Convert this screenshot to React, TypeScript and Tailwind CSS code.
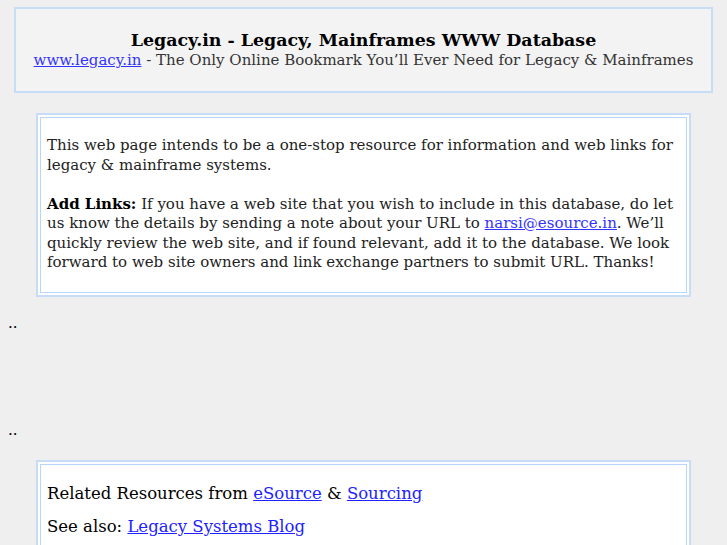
export default function App() {
  const serif = { fontFamily: '"DejaVu Serif", serif' }
  return (
    <div className="min-h-[545px] bg-[#efefef] text-[#222]" style={serif}>
      <div className="pt-[7px]">
        {/* header */}
        <div className="mx-[14px] h-[86px] border-2 border-[#c6dcf7] bg-[#f3f3f3] flex flex-col items-center justify-center">
          <h1 className="text-[17.4px] font-bold leading-[20px] text-black">
            Legacy.in - Legacy, Mainframes WWW Database
          </h1>
          <p className="text-[15px] leading-[20px] text-[#333]">
            <a href="#" className="text-[#3333ff] underline">www.legacy.in</a> - The Only Online Bookmark You’ll Ever Need for Legacy &amp; Mainframes
          </p>
        </div>

        {/* intro */}
        <div className="mt-[20px] ml-[36px] w-[655px] border-2 border-[#c6dcf7] bg-white p-[2px]">
          <div className="border border-[#b8d6fb] px-[6px] pt-[18px] pb-[19px] text-[15px] leading-[19.5px]">
            <p>
              This web page intends to be a one-stop resource for information and web links for legacy &amp; mainframe systems.
            </p>
            <p className="mt-[19.5px]">
              <b className="text-black">Add Links:</b> If you have a web site that you wish to include in this database, do let us know the details by sending a note about your URL to{' '}
              <a href="#" className="text-[#3333ff] underline">narsi@esource.in</a>. We’ll quickly review the web site, and if found relevant, add it to the database. We look forward to web site owners and link exchange partners to submit URL. Thanks!
            </p>
          </div>
        </div>

        <div className="ml-[8px] mt-[16px] text-[15px] leading-[20px] text-black">..</div>
        <div className="h-[87px]" />
        <div className="ml-[8px] text-[15px] leading-[20px] text-black">..</div>

        {/* related */}
        <div className="mt-[20px] ml-[36px] w-[655px] border-2 border-[#c6dcf7] bg-white p-[2px]">
          <div className="border border-[#b8d6fb] px-[6px] pt-[19px] pb-[20px] text-[16.5px] leading-[19.5px] text-black">
            <p>
              Related Resources from <a href="#" className="text-[#2222ff] underline">eSource</a> &amp;{' '}
              <a href="#" className="text-[#2222ff] underline">Sourcing</a>
            </p>
            <p className="mt-[14px]">
              See also: <a href="#" className="text-[#2222ff] underline">Legacy Systems Blog</a>
            </p>
          </div>
        </div>
      </div>
    </div>
  )
}
